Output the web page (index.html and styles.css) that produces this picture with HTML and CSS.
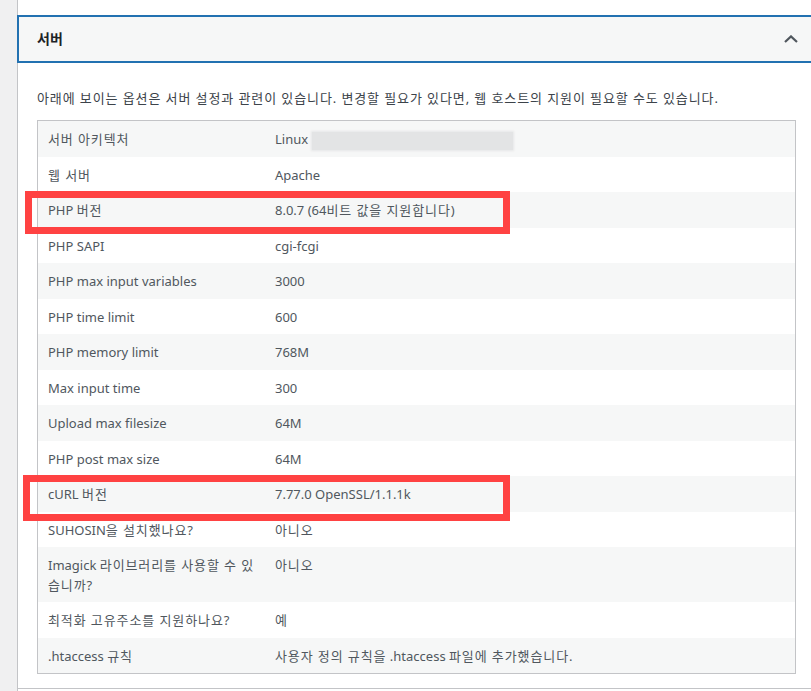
FILE: index.html
```html
<!DOCTYPE html>
<html lang="ko">
<head>
<meta charset="utf-8">
<title>서버</title>
<link rel="stylesheet" href="styles.css">
</head>
<body>
<div class="panel">
  <div class="head">
    <span class="title">서버</span>
    <svg class="chev" width="14" height="8" viewBox="0 0 14 8" aria-hidden="true"><polyline points="1,7 7,1.4 13,7" fill="none" stroke="#50575e" stroke-width="2.2"/></svg>
  </div>
  <div class="body">
    <p class="desc ko">아래에 보이는 옵션은 서버 설정과 관련이 있습니다. 변경할 필요가 있다면, 웹 호스트의 지원이 필요할 수도 있습니다.</p>
    <div class="tablewrap">
      <table class="info">
        <colgroup><col class="c1"><col class="c2"></colgroup>
        <tbody>
          <tr><td><span class="ko">서버 아키텍처</span></td><td>Linux<span class="redact"></span></td></tr>
          <tr><td><span class="ko">웹 서버</span></td><td>Apache</td></tr>
          <tr><td>PHP <span class="ko">버전</span></td><td>8.0.7 (64<span class="ko">비트 값을 지원합니다</span>)</td></tr>
          <tr><td>PHP SAPI</td><td>cgi-fcgi</td></tr>
          <tr><td>PHP max input variables</td><td>3000</td></tr>
          <tr><td>PHP time limit</td><td>600</td></tr>
          <tr><td>PHP memory limit</td><td>768M</td></tr>
          <tr><td>Max input time</td><td>300</td></tr>
          <tr><td>Upload max filesize</td><td>64M</td></tr>
          <tr><td>PHP post max size</td><td>64M</td></tr>
          <tr><td>cURL <span class="ko">버전</span></td><td>7.77.0 OpenSSL/1.1.1k</td></tr>
          <tr><td>SUHOSIN<span class="ko">을 설치했나요</span>?</td><td><span class="ko">아니오</span></td></tr>
          <tr><td>Imagick <span class="ko">라이브러리를 사용할 수 있습니까</span>?</td><td><span class="ko">아니오</span></td></tr>
          <tr><td><span class="ko">최적화 고유주소를 지원하나요</span>?</td><td><span class="ko">예</span></td></tr>
          <tr><td>.htaccess <span class="ko">규칙</span></td><td><span class="ko">사용자 정의 규칙을</span> .htaccess <span class="ko">파일에 추가했습니다</span>.</td></tr>
        </tbody>
      </table>
      <div class="mark mark-php"></div>
      <div class="mark mark-curl"></div>
    </div>
  </div>
  <div class="next"></div>
</div>
</body>
</html>
```
FILE: styles.css
```css
html, body {
  margin: 0;
  padding: 0;
  overflow: hidden;
}
body {
  background: #f0f0f1;
  font-family: "Noto Sans", "Noto Sans CJK KR", sans-serif;
  font-size: 13px;
  color: #3c434a;
}
.ko {
  letter-spacing: 0.9px;
}
.panel {
  margin-left: 17px;
  width: calc(100vw - 18px);
  border-left: 1px solid #c3c4c7;
  background: #fff;
  padding-top: 15px;
  min-height: 700px;
}
.head {
  margin-left: -1px;
  height: 44px;
  border: 2px solid #2271b1;
  border-right: none;
  background: #f6f7f7;
  display: flex;
  align-items: center;
  justify-content: space-between;
  padding: 0 13px 0 18px;
}
.title {
  font-weight: 700;
  font-size: 14px;
  color: #1d2327;
  line-height: 20px;
}
.chev {
  display: block;
}
.body {
  padding: 12px 0 14px 19px;
}
.desc {
  margin: 14px 0 11.5px;
  line-height: 19.5px;
}
.tablewrap {
  position: relative;
  width: 759px;
}
.info {
  width: 759px;
  table-layout: fixed;
  border: 1px solid #c3c4c7;
  border-spacing: 0;
  color: #50575e;
}
.info .c1 { width: 227px; }
.info td {
  padding: 9px 10px 7px;
  line-height: 19.5px;
  vertical-align: top;
}
.info tr:nth-child(odd) td {
  background: #f6f7f7;
}
.redact {
  display: inline-block;
  width: 201px;
  height: 18px;
  margin-left: 4px;
  vertical-align: middle;
  background: #e3e4e5;
  box-shadow: 0 0 2px 1px #e6e7e8;
}
.mark {
  position: absolute;
  border: 7px solid #ff4242;
  box-sizing: border-box;
}
.mark-php {
  left: -12px;
  top: 71px;
  width: 485px;
  height: 43px;
}
.mark-curl {
  left: -14px;
  top: 355px;
  width: 487px;
  height: 46px;
}
.next {
  border-top: 1px solid #c3c4c7;
  height: 20px;
}
```
